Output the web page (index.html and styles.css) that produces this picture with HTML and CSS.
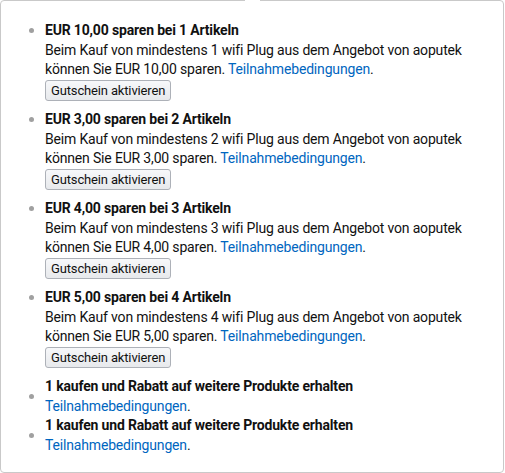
FILE: index.html
```html
<!DOCTYPE html>
<html lang="de">
<head>
<meta charset="utf-8">
<link rel="stylesheet" href="styles.css">
</head>
<body>
<div class="popover">
  <ul class="offers">
    <li class="offer">
      <span class="dot"></span>
      <div class="body">
        <div class="title">EUR 10,00 sparen bei 1 Artikeln</div>
        <div class="line">Beim Kauf von mindestens 1 wifi Plug aus dem Angebot von aoputek</div>
        <div class="line">können Sie EUR 10,00 sparen. <a href="#">Teilnahmebedingungen</a>.</div>
        <button class="btn">Gutschein aktivieren</button>
      </div>
    </li>
    <li class="offer">
      <span class="dot"></span>
      <div class="body">
        <div class="title">EUR 3,00 sparen bei 2 Artikeln</div>
        <div class="line">Beim Kauf von mindestens 2 wifi Plug aus dem Angebot von aoputek</div>
        <div class="line">können Sie EUR 3,00 sparen. <a href="#">Teilnahmebedingungen</a>.</div>
        <button class="btn">Gutschein aktivieren</button>
      </div>
    </li>
    <li class="offer">
      <span class="dot"></span>
      <div class="body">
        <div class="title">EUR 4,00 sparen bei 3 Artikeln</div>
        <div class="line">Beim Kauf von mindestens 3 wifi Plug aus dem Angebot von aoputek</div>
        <div class="line">können Sie EUR 4,00 sparen. <a href="#">Teilnahmebedingungen</a>.</div>
        <button class="btn">Gutschein aktivieren</button>
      </div>
    </li>
    <li class="offer">
      <span class="dot"></span>
      <div class="body">
        <div class="title">EUR 5,00 sparen bei 4 Artikeln</div>
        <div class="line">Beim Kauf von mindestens 4 wifi Plug aus dem Angebot von aoputek</div>
        <div class="line">können Sie EUR 5,00 sparen. <a href="#">Teilnahmebedingungen</a>.</div>
        <button class="btn">Gutschein aktivieren</button>
      </div>
    </li>
    <li class="offer promo">
      <span class="dot"></span>
      <div class="body">
        <div class="title">1 kaufen und Rabatt auf weitere Produkte erhalten</div>
        <div class="line"><a href="#">Teilnahmebedingungen</a>.</div>
      </div>
    </li>
    <li class="offer promo">
      <span class="dot"></span>
      <div class="body">
        <div class="title">1 kaufen und Rabatt auf weitere Produkte erhalten</div>
        <div class="line"><a href="#">Teilnahmebedingungen</a>.</div>
      </div>
    </li>
  </ul>
</div>
</body>
</html>
```
FILE: styles.css
```css
html, body {
  margin: 0;
  padding: 0;
  background: #fff;
}
body {
  font-family: Roboto, "Liberation Sans", Arial, sans-serif;
  font-size: 14px;
  line-height: 19.5px;
  letter-spacing: -0.17px;
  color: #111;
}
.popover {
  position: relative;
  box-sizing: border-box;
  width: 504px;
  height: 473px;
  border: 1px solid #c9c9c9;
  border-radius: 4px;
  background: #fff;
}
.popover::before {
  content: "";
  position: absolute;
  top: -1px;
  left: 244px;
  width: 15px;
  height: 1px;
  background: #fff;
}
.offers {
  list-style: none;
  margin: 0;
  padding: 20px 0 0 0;
  display: flex;
  flex-direction: column;
}
.offer {
  display: flex;
  align-items: flex-start;
  margin-bottom: 9.5px;
}
.offer.promo {
  align-items: center;
  margin-bottom: 0;
}
.dot {
  flex: none;
  width: 5px;
  height: 5px;
  border-radius: 50%;
  background: #a0a0a0;
  margin: 7px 11px 0 28px;
}
.promo .dot {
  margin-top: 0;
}
.body {
  display: flex;
  flex-direction: column;
  align-items: flex-start;
}
.title {
  font-weight: bold;
}
.line {
  white-space: nowrap;
}
a {
  color: #0066c0;
  text-decoration: none;
}
.btn {
  margin-top: 0;
  height: 21px;
  padding: 0 5px;
  font-family: inherit;
  font-size: 13px;
  line-height: 19px;
  letter-spacing: -0.15px;
  color: #111;
  border: 1px solid #adb1b8;
  border-radius: 3px;
  background: linear-gradient(#f7f8fa, #e7e9ec);
}
```
